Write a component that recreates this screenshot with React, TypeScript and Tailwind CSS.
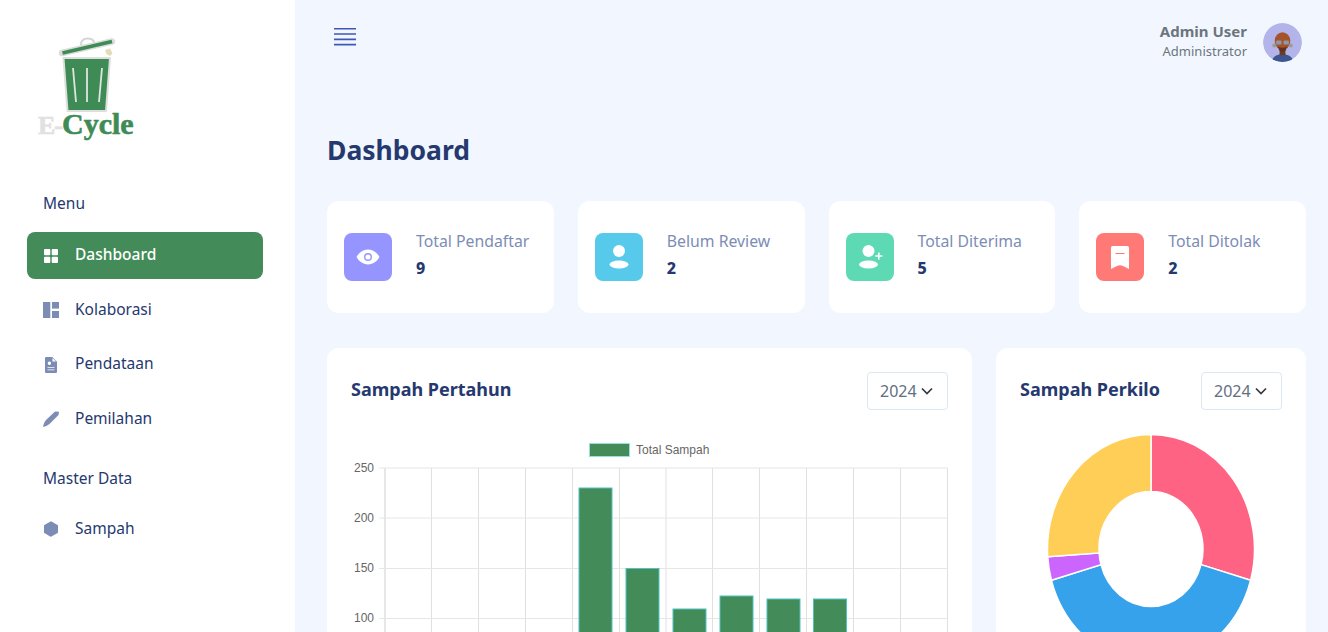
import React from "react";

const FONT = "[font-family:'Noto_Sans',sans-serif]";

const DashIcon = () => (
  <svg width="16" height="16" viewBox="0 0 16 16" fill="currentColor">
    <rect x="1" y="1" width="6.3" height="6.3" rx="1" />
    <rect x="8.7" y="1" width="6.3" height="6.3" rx="1" />
    <rect x="1" y="8.7" width="6.3" height="6.3" rx="1" />
    <rect x="8.7" y="8.7" width="6.3" height="6.3" rx="1" />
  </svg>
);

const ColabIcon = () => (
  <svg width="16" height="16" viewBox="0 0 16 16" fill="currentColor">
    <rect x="0" y="0" width="7.3" height="16" />
    <rect x="9" y="0" width="7" height="6.6" />
    <rect x="9" y="9" width="7" height="7" />
  </svg>
);

const DocIcon = () => (
  <svg width="16" height="16" viewBox="0 0 16 16" fill="currentColor">
    <path
      fillRule="evenodd"
      d="M3.3 0h6L14 4.700v10c0 .8-.6 1.300-1.300 1.300H3.300C2.500 16 2 15.500 2 14.700V1.300C2 .5 2.500 0 3.300 0zM9.500 1v3.500H13zM6.400 4.600a1.700 1.700 0 1 0 0 3.400 1.700 1.700 0 0 0 0-3.400zM4.500 10.200h7v.9h-7zM4.500 12.400h7v.9h-7z"
    />
  </svg>
);

const PenIcon = () => (
  <svg width="16" height="16" viewBox="0 0 16 16" fill="currentColor">
    <path d="M16 .8L15.500 4l-9 9c-2 1.500-4.500 2.500-6.500 3 .3-2.500 1.500-5 3-7l9-8.500z" />
  </svg>
);

const HexIcon = () => (
  <svg width="16" height="16" viewBox="0 0 16 16" fill="currentColor">
    <path d="M8 0.300l6.600 3.700c.3.200.4.400.4.700v6.600c0 .3-.1.500-.4.700L8 15.700c-.1.100-.2.100-.4 0L1.400 12c-.3-.2-.4-.4-.4-.7V4.700c0-.3.100-.5.400-.7z" />
  </svg>
);

const navMain = [
  { label: "Dashboard", icon: <DashIcon />, active: true },
  { label: "Kolaborasi", icon: <ColabIcon /> },
  { label: "Pendataan", icon: <DocIcon /> },
  { label: "Pemilahan", icon: <PenIcon /> },
];

const NavItem = ({ label, icon, active }: { label: string; icon: React.ReactNode; active?: boolean }) => (
  <div
    className={`flex h-[47px] items-center gap-[16px] rounded-[8px] pl-[16px] ${
      active ? "bg-[#438b58] text-[15.500px] font-medium text-white" : "text-[15.500px] text-[#25396f]"
    }`}
  >
    <span className={active ? "text-white" : "text-[#7c8db5]"}>{icon}</span>
    <span className="-mt-[1px]">{label}</span>
  </div>
);

const Logo = () => (
  <div className="ml-[38px] flex w-[100px] flex-col">
    <svg width="60" height="76" viewBox="0 0 60 76" className="ml-[21px]">
      <path d="M22 8c0-5 3-6.500 6.500-6.500S35 3 35 6" fill="none" stroke="#d4d6d4" strokeWidth="2" />
      <path d="M3 16L53 4.500" stroke="#d9dcd9" strokeWidth="6.500" strokeLinecap="round" />
      <path d="M3.500 16L53 4.500" stroke="#3f8b56" strokeWidth="3.600" />
      <path d="M46 13l5-1.500 2.500 5-2.500 2.500-3.500-2z" fill="#e4dcb8" />
      <path d="M4.500 21H51l-4 53H8.500z" fill="#3f8b56" stroke="#dcdfdc" strokeWidth="2" strokeLinejoin="round" />
      <path d="M14 31l3 34M28 31v34M43 31l-3 34" stroke="#dfe5df" strokeWidth="1.800" fill="none" />
    </svg>
    <div className="-mt-[4px] flex h-[30px] items-baseline leading-[30px] font-bold [font-family:'Liberation_Serif',serif] [-webkit-text-stroke:0.6px_currentColor]">
      <span className="text-[26px] tracking-[-1px] text-[#e1e1e1]">E-</span>
      <span className="text-[30px] text-[#3f8b56]">Cycle</span>
    </div>
  </div>
);

const Sidebar = () => (
  <aside className="flex h-full w-[295px] shrink-0 flex-col bg-white pt-[37px]">
    <Logo />
    <div className="mt-[52px] px-[27px] pr-[32px]">
      <div className="mb-[17px] pl-[16px] text-[15.500px] leading-[24px] text-[#25396f]">Menu</div>
      <div className="flex flex-col gap-[7.500px]">
        {navMain.map((item) => (
          <NavItem key={item.label} {...item} />
        ))}
      </div>
      <div className="mt-[23.500px] mb-[15.500px] pl-[16px] text-[15.500px] leading-[24px] text-[#25396f]">
        Master Data
      </div>
      <NavItem label="Sampah" icon={<HexIcon />} />
    </div>
  </aside>
);

const Avatar = () => (
  <svg width="39" height="39" viewBox="0 0 40 40" className="rounded-full">
    <circle cx="20" cy="20" r="20" fill="#b3b5ea" />
    <path d="M9 40c1-6 5-8 11-8s10 2 11 8z" fill="#3d5590" />
    <rect x="17" y="26" width="6" height="7" fill="#6e3a20" />
    <ellipse cx="20" cy="18.500" rx="8" ry="9" fill="#a5532a" />
    <circle cx="11.500" cy="23" r="2" fill="#9a9a9a" />
    <circle cx="28.500" cy="23" r="2" fill="#9a9a9a" />
    <rect x="13.500" y="18" width="5.500" height="4" rx="1" fill="#8f9aa8" />
    <rect x="21" y="18" width="5.500" height="4" rx="1" fill="#8f9aa8" />
    <path d="M15.500 24c3 2 6 2 9 0l-1 4c-2 1.500-5 1.500-7 0z" fill="#5d3220" />
  </svg>
);

const Header = () => (
  <header className="flex items-start justify-between pt-[23px] pr-[26px] pl-[39px]">
    <svg width="22" height="18" viewBox="0 0 22 18" className="mt-[5px]" stroke="#3f58b8" strokeWidth="1.700">
      <path d="M0 .7h22M0 6h22M0 11.300h22M0 16.700h22" />
    </svg>
    <div className="flex items-start gap-[16px]">
      <div className="-mt-[2px] flex flex-col items-end">
        <div className="text-[15px] leading-[20px] font-bold text-[#6c757d]">Admin User</div>
        <div className="text-[13px] leading-[20px] text-[#6c757d]">Administrator</div>
      </div>
      <Avatar />
    </div>
  </header>
);

const stats = [
  {
    label: "Total Pendaftar",
    value: "9",
    bg: "bg-[#9694ff]",
    icon: (
      <svg width="24" height="16" viewBox="0 0 24 16">
        <path d="M12 .5C6.500.5 2.500 4.500.5 8c2 3.500 6 7.500 11.500 7.500S21.500 11.500 23.500 8C21.500 4.500 17.500.5 12 .5z" fill="#fff" />
        <circle cx="12" cy="8" r="3.300" fill="none" stroke="#9694ff" strokeWidth="1.400" />
      </svg>
    ),
  },
  {
    label: "Belum Review",
    value: "2",
    bg: "bg-[#57caeb]",
    icon: (
      <svg width="20" height="24" viewBox="0 0 20 24" fill="#fff">
        <circle cx="10" cy="6" r="6" />
        <ellipse cx="10" cy="19.500" rx="9.500" ry="4" />
      </svg>
    ),
  },
  {
    label: "Total Diterima",
    value: "5",
    bg: "bg-[#5ddab4]",
    icon: (
      <svg width="24" height="24" viewBox="0 0 24 24" fill="#fff" className="ml-[2px]">
        <circle cx="9.500" cy="6" r="6" />
        <ellipse cx="9.500" cy="19.500" rx="9.500" ry="4" />
        <path d="M19 7.500h1.600v2.700h2.700v1.600h-2.700v2.700H19v-2.700h-2.700v-1.600H19z" />
      </svg>
    ),
  },
  {
    label: "Total Ditolak",
    value: "2",
    bg: "bg-[#ff7976]",
    icon: (
      <svg width="18" height="23" viewBox="0 0 18 23">
        <path d="M2 0h14c1.100 0 2 .9 2 2v21l-6.500-3.300c-1.500-.7-3.500-.7-5 0L0 23V2C0 .9.900 0 2 0z" fill="#fff" />
        <path d="M4.500 7.500h9" stroke="#ff7976" strokeWidth="1" />
      </svg>
    ),
  },
];

const StatCard = ({ label, value, bg, icon }: (typeof stats)[number]) => (
  <div className="flex h-[112px] items-center rounded-[12px] bg-white pl-[17px]">
    <div className={`flex h-[48px] w-[48px] shrink-0 items-center justify-center rounded-[8px] ${bg}`}>{icon}</div>
    <div className="mb-[6px] ml-[24px]">
      <div className="text-[15.800px] leading-[24px] text-[#7c8db5]">{label}</div>
      <div className="mt-[3px] text-[16px] leading-[24px] font-extrabold text-[#25396f]">{value}</div>
    </div>
  </div>
);

const YearSelect = () => (
  <div className="flex h-[38px] w-[81px] items-center gap-[4px] rounded-[4px] border border-[#dce7f1] pb-[1px] pl-[12px] text-[16px] text-[#607080]">
    2024
    <svg width="12" height="8" viewBox="0 0 12 8" fill="none" stroke="#343a40" strokeWidth="1.700">
      <path d="M1 1.500l5 5 5-5" />
    </svg>
  </div>
);

const ChartHeader = ({ title }: { title: string }) => (
  <div className="flex items-start justify-between">
    <div className="mt-[4px] text-[18px] leading-[26px] font-bold text-[#25396f]">{title}</div>
    <YearSelect />
  </div>
);

const vLines = [385, 431.500, 478.500, 525.500, 572.500, 619.500, 666, 712.500, 759.500, 806.500, 853.500, 900.500, 947.500];
const hLines = [
  { y: 468, label: "250" },
  { y: 518, label: "200" },
  { y: 568.500, label: "150" },
  { y: 618.500, label: "100" },
];
const bars = [
  { x: 579, top: 488 },
  { x: 626, top: 568.500 },
  { x: 673, top: 609 },
  { x: 720, top: 596 },
  { x: 767, top: 599 },
  { x: 813.500, top: 599 },
];

// the chart canvas in the page is stretched a bit in height, so are its labels
const BarChart = () => (
  <svg viewBox="351 434 597 300" className="mt-[24px] block h-[300px] w-[597px]">
    <rect x="589.500" y="443.500" width="40" height="13" fill="#438b58" stroke="#9adfd9" />
    <text
      transform="translate(636 453.500) scale(1 1.100)"
      fontSize="12"
      fill="#666"
      fontFamily="'Liberation Sans', sans-serif"
    >
      Total Sampah
    </text>
    {vLines.map((x, i) => (
      <line key={x} x1={x} x2={x} y1="468" y2="734" stroke={i === 0 ? "#cfcfcf" : "#e0e0e0"} />
    ))}
    {hLines.map((l) => (
      <g key={l.y}>
        <line x1="379" x2="948" y1={l.y} y2={l.y} stroke="#e6e6e6" />
        <text
          transform={`translate(374 ${l.y + 3.5}) scale(1 1.100)`}
          textAnchor="end"
          fontSize="12"
          fill="#666"
          fontFamily="'Liberation Sans', sans-serif"
        >
          {l.label}
        </text>
      </g>
    ))}
    {bars.map((b) => (
      <rect key={b.x} x={b.x} y={b.top} width="33" height={740 - b.top} fill="#438b58" stroke="#4fc3c0" strokeWidth="1" />
    ))}
  </svg>
);

// angles clockwise from 12 o'clock
const slices = [
  { from: 0, to: 105.800, color: "#ff6384" },
  { from: 105.800, to: 254.200, color: "#36a2eb" },
  { from: 254.200, to: 266.100, color: "#cc65fe" },
  { from: 266.100, to: 360, color: "#ffce56" },
];

const polar = (rx: number, ry: number, deg: number) => {
  const a = (deg * Math.PI) / 180;
  return `${1151 + rx * Math.sin(a)} ${549 - ry * Math.cos(a)}`;
};

const slicePath = (from: number, to: number) => {
  const large = to - from > 180 ? 1 : 0;
  return `M${polar(103.5, 114.5, from)} A103.500 114.500 0 ${large} 1 ${polar(103.5, 114.5, to)} L${polar(52, 57.5, to)} A52 57.500 0 ${large} 0 ${polar(52, 57.5, from)} Z`;
};

const Donut = () => (
  <svg viewBox="1020 434 262 240" className="mt-[24px] block h-[240px] w-[262px]">
    {slices.map((s) => (
      <path key={s.color} d={slicePath(s.from, s.to)} fill={s.color} stroke="#fff" strokeWidth="1.500" />
    ))}
  </svg>
);

export default function App() {
  return (
    <div className={`flex h-[632px] w-full overflow-hidden bg-[#f2f7ff] ${FONT}`}>
      <Sidebar />
      <main className="min-w-0 flex-1">
        <Header />
        <div className="pr-[22px] pl-[32px]">
          <h1 className="mt-[70px] text-[26.500px] leading-[36px] font-bold text-[#25396f]">Dashboard</h1>
          <div className="mt-[33px] grid grid-cols-4 gap-[24px]">
            {stats.map((s) => (
              <StatCard key={s.label} {...s} />
            ))}
          </div>
          <div className="mt-[35px] flex gap-[24px]">
            <section className="min-w-0 flex-1 rounded-[12px] bg-white p-[24px]">
              <ChartHeader title="Sampah Pertahun" />
              <BarChart />
            </section>
            <section className="w-[310px] shrink-0 rounded-[12px] bg-white p-[24px]">
              <ChartHeader title="Sampah Perkilo" />
              <Donut />
            </section>
          </div>
        </div>
      </main>
    </div>
  );
}
